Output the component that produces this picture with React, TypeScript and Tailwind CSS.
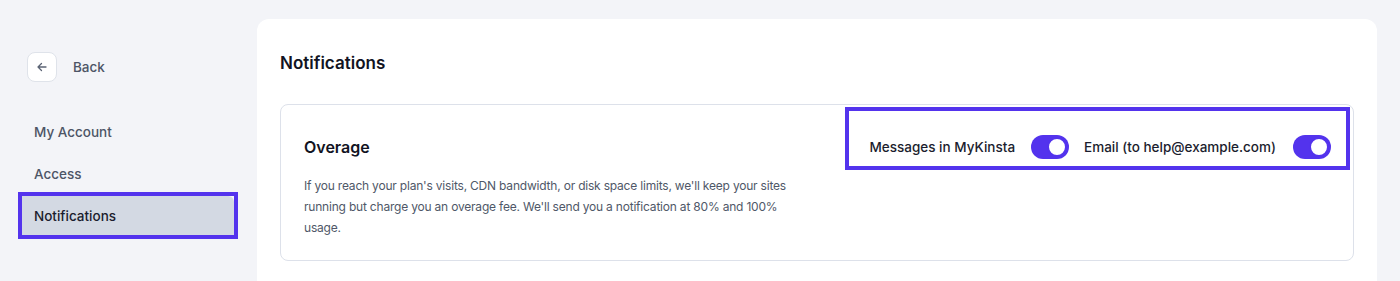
import React from "react";

function Toggle() {
  return (
    <div className="flex h-[24px] w-[38px] shrink-0 items-center justify-end rounded-full bg-[#5333ed] px-[2px]">
      <div className="h-[20px] w-[20px] rounded-full border-2 border-[#5333ed] bg-white" />
    </div>
  );
}

function NavItem({ label, active }: { label: string; active?: boolean }) {
  if (active) {
    return (
      <div className="-mt-[3px] ml-[18px] mr-[19px] border-4 border-[#5333ed]">
        <div className="flex h-[39px] items-center rounded-tr-md bg-[#d3d9e3] pl-[12px] pt-[2px] text-[13.5px] font-medium text-[#1b1d2e]">
          {label}
        </div>
      </div>
    );
  }
  return (
    <div className="flex h-[42px] items-center pl-[34px] text-[13.5px] font-medium text-[#4d5566]">
      {label}
    </div>
  );
}

export default function App() {
  return (
    <div
      className="flex h-[281px] w-full overflow-hidden bg-[#f3f4f8]"
      style={{ fontFamily: "Inter, 'Noto Sans', sans-serif" }}
    >
      {/* Sidebar */}
      <aside className="w-[257px] shrink-0 pt-[52px]">
        <div className="flex items-center gap-[16px] pl-[27px]">
          <button className="flex h-[30px] w-[30px] items-center justify-center rounded-lg border border-[#dfe3ea] bg-white text-[#5b6374]">
            <svg width="12" height="12" viewBox="0 0 12 12" fill="none" stroke="currentColor" strokeWidth="1.3" strokeLinecap="round" strokeLinejoin="round">
              <path d="M10 6H2M5.5 2.5 2 6l3.5 3.5" />
            </svg>
          </button>
          <span className="text-[13.5px] font-medium text-[#4d5566]">Back</span>
        </div>
        <nav className="mt-[29px]">
          <NavItem label="My Account" />
          <NavItem label="Access" />
          <NavItem label="Notifications" active />
        </nav>
      </aside>

      {/* Main card */}
      <main className="mt-[19px] mr-[23px] flex-1 rounded-t-[12px] bg-white px-[23px] pt-[32px]">
        <h1 className="text-[17px] leading-[24px] font-semibold text-[#111322]">Notifications</h1>
        <section className="mt-[29px] flex h-[157px] items-start justify-between rounded-lg border border-[#dde1ea]">
          <div className="pl-[23px] pt-[30px]">
            <h2 className="text-[16px] leading-[24px] font-semibold text-[#111322]">Overage</h2>
            <p className="mt-[16px] max-w-[492px] text-[12px] leading-[21px] tracking-[-0.2px] text-[#4f5868]">
              If you reach your plan's visits, CDN bandwidth, or disk space limits, we'll keep your sites running but charge you an overage fee. We'll send you a notification at 80% and 100% usage.
            </p>
          </div>
          <div className="mt-[2px] mr-[3px] flex shrink-0 items-center whitespace-nowrap border-4 border-[#5333ed] pt-[24px] pb-[7px] pl-[21px] pr-[15px]">
            <span className="text-[13.5px] font-medium text-[#1b1d2e]">Messages in MyKinsta</span>
            <span className="ml-[16px]"><Toggle /></span>
            <span className="ml-[15px] text-[13.5px] font-medium text-[#1b1d2e]">Email (to help@example.com)</span>
            <span className="ml-[17px]"><Toggle /></span>
          </div>
        </section>
      </main>
    </div>
  );
}
